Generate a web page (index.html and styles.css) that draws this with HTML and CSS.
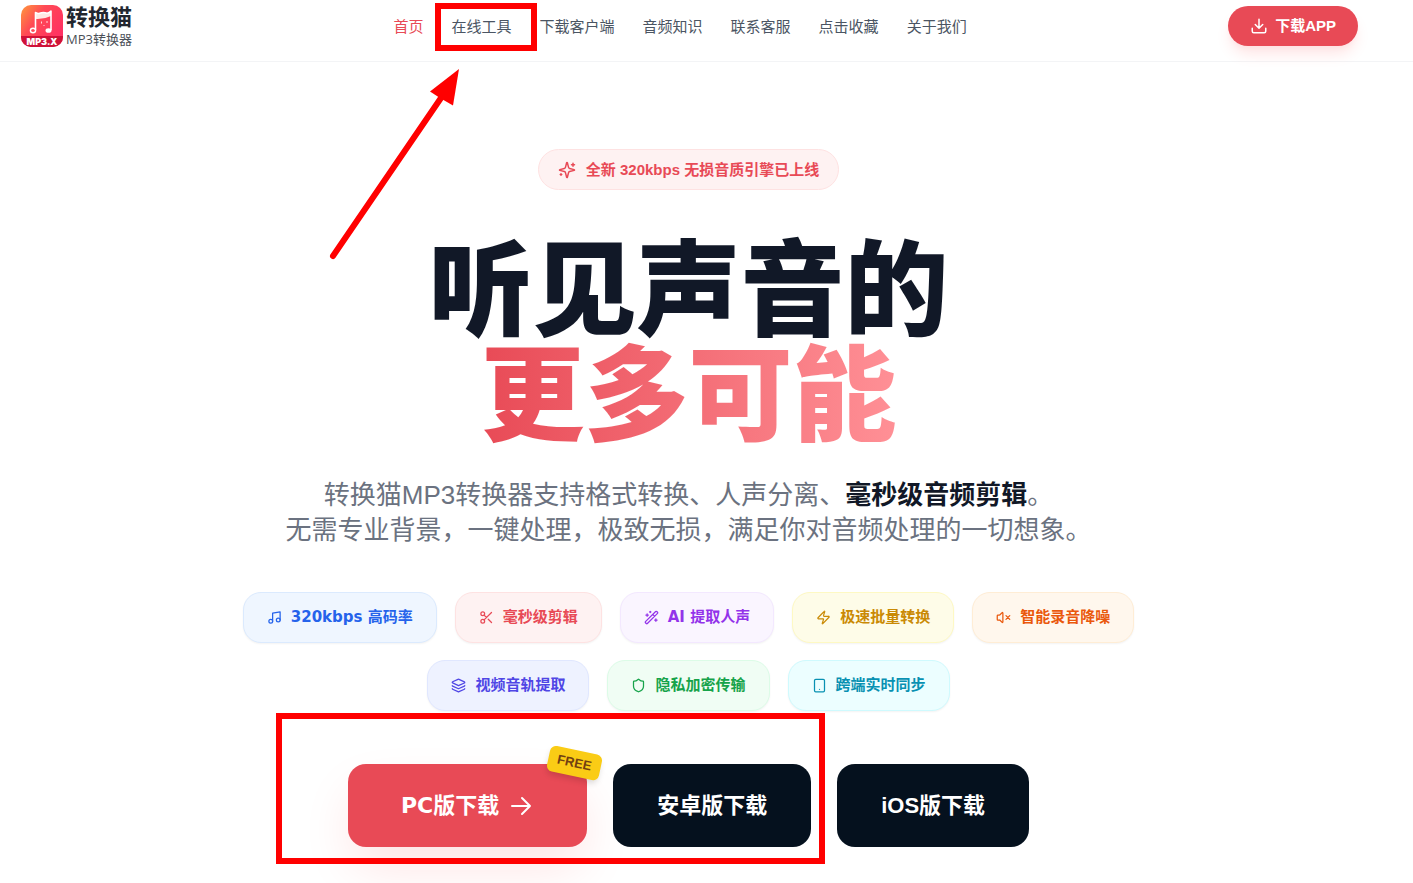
FILE: index.html
```html
<!DOCTYPE html>
<html lang="zh-CN">
<head>
<meta charset="utf-8">
<meta name="viewport" content="width=device-width, initial-scale=1">
<title>转换猫MP3转换器</title>
<link rel="stylesheet" href="styles.css">
</head>
<body>
<header class="header">
  <a class="logo" href="#">
    <svg class="logo-mark" viewBox="0 0 42 42" aria-hidden="true">
      <defs>
        <linearGradient id="lg" x1="0" y1="0" x2="1" y2="0.7"><stop offset="0" stop-color="#ff9a3c"/><stop offset=".4" stop-color="#ff4a55"/><stop offset="1" stop-color="#ff2f63"/></linearGradient>
        <clipPath id="lc"><rect width="42" height="42" rx="10"/></clipPath>
      </defs>
      <g clip-path="url(#lc)">
        <rect width="42" height="42" fill="url(#lg)"/>
        <rect y="31" width="42" height="11" fill="#cf1238"/>
        <path d="M14.500 8q2.500 1 4 .3 4-1.600 7.500 0 2.500-.3 4-2V11q-7 3.500-15.500 3z" fill="#ffe9e4"/>
        <path d="M14.500 25V7.500q2.500 1.300 4 .8 4-1.600 7.500 0 2.500-.5 4-2.300V25" fill="none" stroke="#fff" stroke-width="1.600" stroke-linejoin="round"/>
        <ellipse cx="12" cy="25.500" rx="2.600" ry="2.200" fill="none" stroke="#fff" stroke-width="1.400"/>
        <ellipse cx="27.500" cy="25.500" rx="3" ry="2.300" fill="#fff"/>
        <path d="M20.500 16.500v2M26 16v2M22.500 20.500h1" stroke="#ffd9dc" stroke-width="1"/>
        <text class="logo-tag" x="21" y="40" text-anchor="middle">MP3.X</text>
      </g>
    </svg>
    <span class="logo-text"><strong class="logo-name">转换猫</strong><span class="logo-sub">MP3转换器</span></span>
  </a>
  <nav class="nav">
    <a class="nav-link nav-link-active" href="#">首页</a>
    <a class="nav-link" href="#">在线工具</a>
    <a class="nav-link" href="#">下载客户端</a>
    <a class="nav-link" href="#">音频知识</a>
    <a class="nav-link" href="#">联系客服</a>
    <a class="nav-link" href="#">点击收藏</a>
    <a class="nav-link" href="#">关于我们</a>
  </nav>
  <button class="app-button" type="button">
    <svg class="icon icon-md" viewBox="0 0 24 24"><path d="M12 15V3M7 10l5 5 5-5M21 15v4a2 2 0 0 1-2 2H5a2 2 0 0 1-2-2v-4"/></svg>
    下载APP
  </button>
</header>

<main class="hero">
  <p class="badge">
    <svg class="icon icon-md" viewBox="0 0 24 24"><path d="M9.937 15.500A2 2 0 0 0 8.500 14.063l-6.135-1.582a.5.5 0 0 1 0-.962L8.500 9.936A2 2 0 0 0 9.937 8.500l1.582-6.135a.5.5 0 0 1 .963 0L14.063 8.500A2 2 0 0 0 15.500 9.937l6.135 1.581a.5.5 0 0 1 0 .964L15.500 14.063a2 2 0 0 0-1.437 1.437l-1.582 6.135a.5.5 0 0 1-.963 0zM20 3v4M22 5h-4M4 17v2M5 18H3"/></svg>
    全新 320kbps 无损音质引擎已上线
  </p>
  <h1 class="title">听见声音的<br><span class="title-accent">更多可能</span></h1>
  <p class="lead">转换猫MP3转换器支持格式转换、人声分离、<strong class="lead-strong">毫秒级音频剪辑</strong>。<br>无需专业背景，一键处理，极致无损，满足你对音频处理的一切想象。</p>

  <ul class="chips">
    <li class="chip chip-blue"><svg class="icon icon-sm" viewBox="0 0 24 24"><path d="M9 18V5l12-2v13"/><circle cx="6" cy="18" r="3"/><circle cx="18" cy="16" r="3"/></svg>320kbps 高码率</li>
    <li class="chip chip-red"><svg class="icon icon-sm" viewBox="0 0 24 24"><circle cx="6" cy="6" r="3"/><path d="M8.120 8.120 12 12M20 4 8.120 15.880"/><circle cx="6" cy="18" r="3"/><path d="M14.800 14.800 20 20"/></svg>毫秒级剪辑</li>
    <li class="chip chip-purple"><svg class="icon icon-sm" viewBox="0 0 24 24"><path d="m21.640 3.640-1.280-1.280a1.210 1.210 0 0 0-1.720 0L2.360 18.640a1.210 1.210 0 0 0 0 1.720l1.280 1.280a1.200 1.200 0 0 0 1.720 0L21.640 5.360a1.200 1.200 0 0 0 0-1.720M14 7l3 3M5 6v4M19 14v4M10 2v2M7 8H3M21 16h-4M11 3H9"/></svg>AI 提取人声</li>
    <li class="chip chip-yellow"><svg class="icon icon-sm" viewBox="0 0 24 24"><path d="M4 14a1 1 0 0 1-.780-1.630l9.900-10.200a.5.5 0 0 1 .860.460l-1.920 6.020A1 1 0 0 0 13 10h7a1 1 0 0 1 .780 1.630l-9.900 10.200a.5.5 0 0 1-.860-.460l1.920-6.020A1 1 0 0 0 11 14z"/></svg>极速批量转换</li>
    <li class="chip chip-orange"><svg class="icon icon-sm" viewBox="0 0 24 24"><path d="M11 4.702a.705.705 0 0 0-1.203-.498L6.413 7.587A1.400 1.400 0 0 1 5.416 8H3a1 1 0 0 0-1 1v6a1 1 0 0 0 1 1h2.416a1.400 1.400 0 0 1 .997.413l3.383 3.384A.705.705 0 0 0 11 19.298zM22 9l-6 6M16 9l6 6"/></svg>智能录音降噪</li>
    <li class="chip chip-indigo"><svg class="icon icon-sm" viewBox="0 0 24 24"><path d="M12.830 2.180a2 2 0 0 0-1.660 0L2.600 6.080a1 1 0 0 0 0 1.830l8.580 3.910a2 2 0 0 0 1.660 0l8.580-3.900a1 1 0 0 0 0-1.830zM2 12a1 1 0 0 0 .580.910l8.600 3.910a2 2 0 0 0 1.650 0l8.580-3.900A1 1 0 0 0 22 12M2 17a1 1 0 0 0 .580.910l8.600 3.910a2 2 0 0 0 1.650 0l8.580-3.900A1 1 0 0 0 22 17"/></svg>视频音轨提取</li>
    <li class="chip chip-green"><svg class="icon icon-sm" viewBox="0 0 24 24"><path d="M20 13c0 5-3.500 7.500-7.660 8.950a1 1 0 0 1-.670-.010C7.500 20.500 4 18 4 13V6a1 1 0 0 1 1-1c2 0 4.500-1.200 6.240-2.720a1.170 1.170 0 0 1 1.520 0C14.510 3.810 17 5 19 5a1 1 0 0 1 1 1z"/></svg>隐私加密传输</li>
    <li class="chip chip-cyan"><svg class="icon icon-sm" viewBox="0 0 24 24"><rect x="4" y="2" width="16" height="20" rx="2"/><path d="M12 18h.01"/></svg>跨端实时同步</li>
  </ul>

  <div class="downloads">
    <button class="download download-primary" type="button">PC版下载
      <svg class="icon icon-lg" viewBox="0 0 24 24"><path d="M3 12h18M13 4l8 8-8 8"/></svg>
      <span class="free-tag">FREE</span>
    </button>
    <button class="download" type="button">安卓版下载</button>
    <button class="download" type="button">iOS版下载</button>
  </div>
</main>

<svg class="marks" aria-hidden="true">
  <rect x="438" y="6" width="96" height="42"/>
  <rect x="279" y="716" width="543" height="145"/>
  <path d="M333 256 443 95" stroke-linecap="round"/>
  <path class="mark-head" d="M459 69 430 91.500 440 98 453 105.500z"/>
</svg>
</body>
</html>
```
FILE: styles.css
```css
* { box-sizing: border-box; }
body {
  margin: 0;
  min-height: 100vh;
  background: #fff;
  color: #111827;
  font-family: "Liberation Sans", "Noto Sans CJK SC", sans-serif;
  position: relative;
}
a { text-decoration: none; color: inherit; }
button { border: 0; font-family: inherit; cursor: pointer; }
.icon {
  fill: none;
  stroke: currentColor;
  stroke-width: 2;
  stroke-linecap: round;
  stroke-linejoin: round;
  flex: none;
}
.icon-sm { width: 15px; height: 15px; }
.icon-md { width: 18px; height: 18px; }
.icon-lg { width: 24px; height: 24px; }

.header {
  display: flex;
  align-items: center;
  justify-content: space-between;
  padding: 5px 55px 14px 21px;
  border-bottom: 1px solid #f3f4f6;
}
.logo { display: flex; align-items: center; gap: 3px; }
.logo-mark { width: 42px; height: 42px; }
.logo-tag { font: 900 9px Inter, sans-serif; fill: #fff; }
.logo-text { display: flex; flex-direction: column; }
.logo-name { font-size: 22px; line-height: 26px; color: #22262e; }
.logo-sub {
  font-family: "Open Sans", "Noto Sans CJK SC", sans-serif;
  font-size: 13px;
  line-height: 16px;
  color: #4b5058;
}
.nav { display: flex; gap: 28px; padding-top: 2px; }
.nav-link { font-size: 15px; line-height: 22px; color: #4b5563; white-space: nowrap; }
.nav-link-active { color: #e84a56; }
.app-button {
  display: flex;
  align-items: center;
  gap: 7px;
  padding: 9px 22px;
  border-radius: 20px;
  background: #e84a56;
  color: #fff;
  font-size: 15px;
  font-weight: 700;
  line-height: 22px;
  box-shadow: 0 10px 16px -3px #fee2e2, 0 4px 6px -4px #fecdd3;
}

.hero {
  display: flex;
  flex-direction: column;
  align-items: center;
  padding: 87px 36px 0 0;
}
.badge {
  display: flex;
  align-items: center;
  gap: 10px;
  margin: 0;
  padding: 9px 19px;
  border: 1px solid #fee2e2;
  border-radius: 24px;
  background: #fef2f2;
  color: #e84a56;
  font-size: 15px;
  font-weight: 700;
  line-height: 21px;
}
.title {
  margin: 50px 0 0;
  font-size: 104px;
  font-weight: 900;
  line-height: 105px;
  text-align: center;
}
.title-accent {
  background: linear-gradient(to right, #e84a56, #ff9096);
  background-clip: text;
  -webkit-background-clip: text;
  color: transparent;
}
.lead {
  margin: 28px 0 0;
  font-size: 26px;
  line-height: 35px;
  color: #6b7280;
  text-align: center;
}
.lead-strong { color: #111827; }

.chips {
  display: flex;
  flex-wrap: wrap;
  justify-content: center;
  gap: 17px 18px;
  max-width: 930px;
  margin: 44px 0 0;
  padding: 0;
  list-style: none;
}
.chip {
  display: flex;
  align-items: center;
  gap: 9px;
  padding: 14px 23px;
  border: 1px solid;
  border-radius: 18px;
  font-family: "DejaVu Sans", "Noto Sans CJK SC", sans-serif;
  font-size: 15px;
  font-weight: 700;
  line-height: 21px;
  box-shadow: 0 1px 2px rgba(0, 0, 0, 0.05);
}
.chip-blue { color: #2563eb; background: #eff6ff; border-color: #dbeafe; }
.chip-red { color: #e84a56; background: #fef2f2; border-color: #fee2e2; }
.chip-purple { color: #9333ea; background: #faf5ff; border-color: #f3e8ff; }
.chip-yellow { color: #ca8a04; background: #fefce8; border-color: #fef9c3; }
.chip-orange { color: #ea580c; background: #fff7ed; border-color: #ffedd5; }
.chip-indigo { color: #4f46e5; background: #eef2ff; border-color: #e0e7ff; }
.chip-green { color: #16a34a; background: #f0fdf4; border-color: #dcfce7; }
.chip-cyan { color: #0891b2; background: #ecfeff; border-color: #cffafe; }

.downloads { display: flex; gap: 26px; margin-top: 53px; }
.download {
  position: relative;
  display: flex;
  align-items: center;
  padding: 25px 44px;
  border-radius: 18px;
  background: #05111e;
  color: #fff;
  font-size: 22px;
  font-weight: 700;
  line-height: 33px;
}
.download-primary {
  gap: 10px;
  padding: 25px 54px 25px 53px;
  background: #e84a56;
  font-family: "DejaVu Sans", "Noto Sans CJK SC", sans-serif;
  box-shadow: 0 24px 52px -6px #fee2e2;
}
.free-tag {
  position: absolute;
  top: -14px;
  right: -13px;
  padding: 4px 9px;
  border-radius: 6px;
  background: #facc15;
  color: #713f12;
  font: 700 13px/18px "Liberation Sans", sans-serif;
  transform: rotate(12deg);
  box-shadow: 0 4px 6px -1px rgba(0, 0, 0, 0.15);
}

.marks {
  position: absolute;
  top: 0;
  left: 0;
  width: 100%;
  height: 100%;
  pointer-events: none;
  fill: none;
  stroke: #f00;
  stroke-width: 6;
}
.mark-head { fill: #f00; stroke: none; }
```
